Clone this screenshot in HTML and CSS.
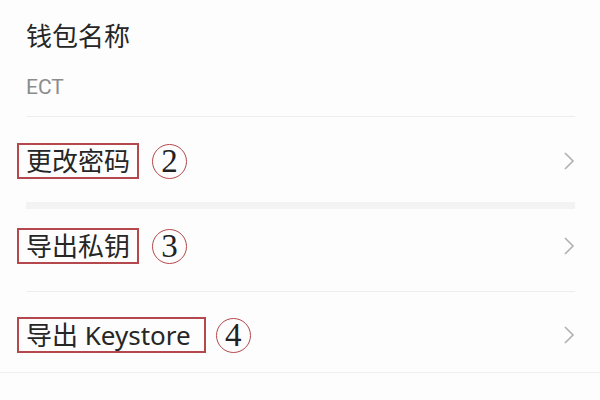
FILE: index.html
```html
<!DOCTYPE html>
<html lang="zh-CN">
<head>
<meta charset="utf-8">
<title>钱包设置</title>
<link rel="stylesheet" href="styles.css">
</head>
<body>
<main class="page">
  <section class="group">
    <div class="title">钱包名称</div>
    <div class="value">ECT</div>
    <div class="rule"></div>
    <div class="row row-1">
      <span class="label">更改密码</span>
      <span class="num">2</span>
      <svg class="chev" width="14" height="22" viewBox="0 0 14 22"><polyline points="3,3 11,11 3,19" fill="none" stroke="#b0b0b0" stroke-width="1.6"/></svg>
    </div>
  </section>
  <div class="band"></div>
  <section class="group">
    <div class="row row-2">
      <span class="label">导出私钥</span>
      <span class="num">3</span>
      <svg class="chev" width="14" height="22" viewBox="0 0 14 22"><polyline points="3,3 11,11 3,19" fill="none" stroke="#b0b0b0" stroke-width="1.6"/></svg>
    </div>
    <div class="rule"></div>
    <div class="row row-3">
      <span class="label label-wide">导出 Keystore</span>
      <span class="num num-near">4</span>
      <svg class="chev" width="14" height="22" viewBox="0 0 14 22"><polyline points="3,3 11,11 3,19" fill="none" stroke="#b0b0b0" stroke-width="1.6"/></svg>
    </div>
  </section>
  <div class="rule-full"></div>
</main>
</body>
</html>
```

FILE: styles.css
```css
html, body {
  margin: 0;
  padding: 0;
  background: #fdfdfd;
}
.page {
  width: 600px;
  height: 400px;
  overflow: hidden;
  font-family: "Noto Sans", "Noto Sans CJK SC", sans-serif;
  color: #222;
}
.group {
  padding: 0 25px 0 26px;
}
.title {
  margin-top: 21px;
  font-size: 26px;
  line-height: 30px;
  color: #262626;
}
.value {
  margin-top: 24px;
  font-family: Roboto, "Noto Sans", sans-serif;
  font-size: 21px;
  line-height: 24px;
  color: #8c8c8c;
  padding-bottom: 17px;
}
.rule {
  height: 1px;
  background: #ededed;
}
.rule-full {
  height: 1px;
  background: #f0f0f0;
}
.band {
  height: 7px;
  margin: 0 25px 0 26px;
  background: #f3f3f3;
}
.row {
  display: flex;
  align-items: center;
}
.row-1 { padding: 26px 0 23px; }
.row-2 { padding: 19px 0 27px; }
.row-3 { padding: 25px 0 19px; }
.label {
  margin-left: -9px;
  border: 2px solid #b4484c;
  padding: 0 7px;
  font-size: 26px;
  line-height: 32px;
  color: #262626;
  white-space: nowrap;
}
.label-wide {
  padding-right: 13px;
}
.num {
  margin-left: 13px;
  width: 33px;
  height: 33px;
  border: 1.5px solid #b4484c;
  border-radius: 50%;
  display: flex;
  align-items: center;
  justify-content: center;
  font-family: "Liberation Serif", serif;
  font-size: 33px;
  line-height: 1;
  color: #222;
}
.num-near {
  margin-left: 10px;
}
.chev {
  margin-left: auto;
  margin-right: -1px;
}
```
